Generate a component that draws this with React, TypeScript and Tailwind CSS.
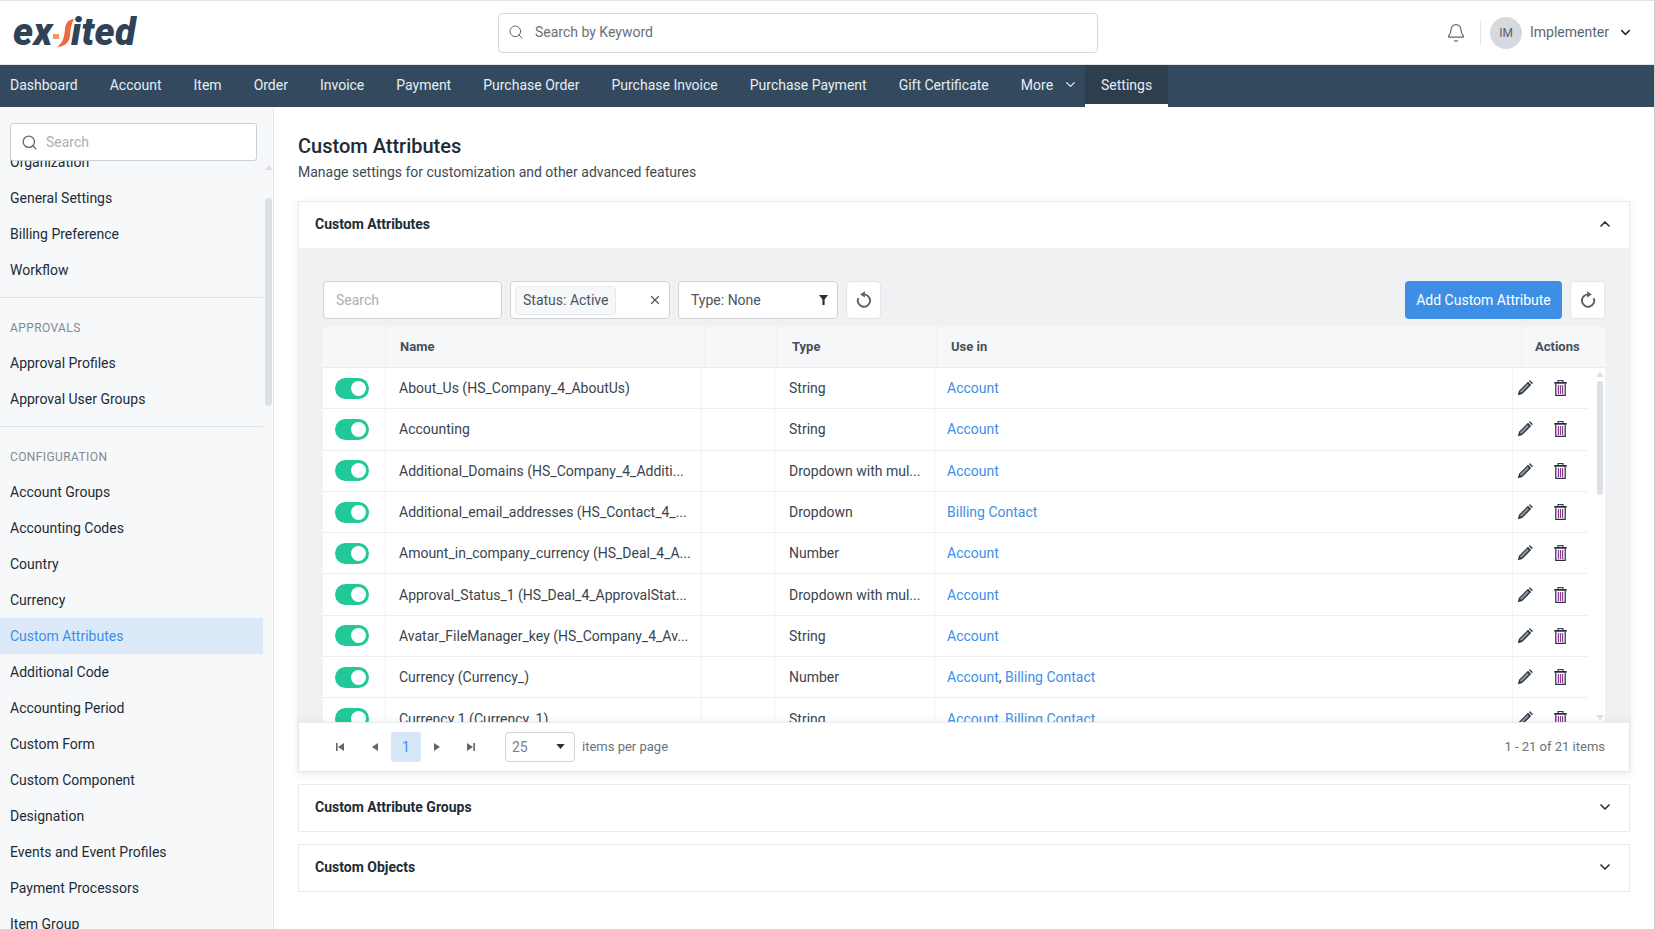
import { Bell, ChevronDown, ChevronUp, Search, X } from "lucide-react";

const navItems = ["Dashboard", "Account", "Item", "Order", "Invoice", "Payment", "Purchase Order", "Purchase Invoice", "Purchase Payment", "Gift Certificate"];

const rows = [
  { name: "About_Us (HS_Company_4_AboutUs)", type: "String", use: ["Account"] },
  { name: "Accounting", type: "String", use: ["Account"] },
  { name: "Additional_Domains (HS_Company_4_Additi...", type: "Dropdown with mul...", use: ["Account"] },
  { name: "Additional_email_addresses (HS_Contact_4_...", type: "Dropdown", use: ["Billing Contact"] },
  { name: "Amount_in_company_currency (HS_Deal_4_A...", type: "Number", use: ["Account"] },
  { name: "Approval_Status_1 (HS_Deal_4_ApprovalStat...", type: "Dropdown with mul...", use: ["Account"] },
  { name: "Avatar_FileManager_key (HS_Company_4_Av...", type: "String", use: ["Account"] },
  { name: "Currency (Currency_)", type: "Number", use: ["Account", "Billing Contact"] },
  { name: "Currency 1 (Currency_1)", type: "String", use: ["Account", "Billing Contact"] },
];

const sideTop = ["Organization", "General Settings", "Billing Preference", "Workflow"];
const sideApprovals = ["Approval Profiles", "Approval User Groups"];
const sideConfig = ["Account Groups", "Accounting Codes", "Country", "Currency", "Custom Attributes", "Additional Code", "Accounting Period", "Custom Form", "Custom Component", "Designation", "Events and Event Profiles", "Payment Processors", "Item Group"];

function Logo() {
  return (
    <div className="flex items-baseline text-[38px] leading-none font-black italic text-[#2e4358] tracking-[0.4px]">
      <span>ex</span>
      <svg width="22" height="34" viewBox="0 0 22 34" className="self-end -ml-px -mr-[3px] mb-[2px]">
        <rect x="1" y="19" width="6" height="5" fill="#f59a5c" />
        <path d="M22 4 C15 5 13.5 9 13 14 C12.5 21 11 28 5 32 C12 32 17 28 18 21 C18.5 15 19 9 22 4 Z" fill="#ef6a3a" />
      </svg>
      <span>ited</span>
    </div>
  );
}

function SideItem({ label, active }: { label: string; active?: boolean }) {
  return (
    <div className={`h-9 shrink-0 flex items-center pl-2.5 text-sm ${active ? "bg-[#dbe9f9] text-[#3d8fe6]" : "text-[#212b36]"}`}>
      {label}
    </div>
  );
}

function SideLabel({ label }: { label: string }) {
  return <div className="h-[23px] mt-[18px] mb-[6px] flex items-center pl-2.5 text-xs tracking-[0.4px] text-[#7f8a96]">{label}</div>;
}

function RefreshCcw() {
  return (
    <svg width="18" height="18" viewBox="0 0 16 16" fill="none">
      <path d="M2.9 6.3 A5.5 5.5 0 1 0 8 3" stroke="#5c6168" strokeWidth="1.7" />
      <path d="M8.8 0.2 V5.8 L4.6 3 Z" fill="#5c6168" />
    </svg>
  );
}

function RefreshCw() {
  return (
    <svg width="18" height="18" viewBox="0 0 16 16" fill="none">
      <path d="M13.1 6.3 A5.5 5.5 0 1 1 8 3" stroke="#5c6168" strokeWidth="1.7" />
      <path d="M7.2 0.2 V5.8 L11.4 3 Z" fill="#5c6168" />
    </svg>
  );
}

function PencilIcon() {
  return (
    <svg width="16" height="16" viewBox="0 0 16 16">
      <path d="M0.8 15.2 L2 10.8 L11 1.8 L14.2 5 L5.2 14 Z" fill="#2d3540" />
      <path d="M2.8 11.4 L10.4 3.8 L12 5.2 L4.4 12.9 Z" fill="#8a95a0" />
      <path d="M11.8 1 L13 0.2 L15.8 3 L15 4.2 Z" fill="#2d3540" />
    </svg>
  );
}

function TrashIcon() {
  return (
    <svg width="13" height="16" viewBox="0 0 13 16" fill="none">
      <rect x="0.3" y="2" width="12.4" height="1.7" fill="#262a38" />
      <rect x="4" y="0.4" width="5" height="2" stroke="#262a38" strokeWidth="1" />
      <path d="M1.8 3.5 V15.4 H11.2 V3.5" stroke="#2f2a40" strokeWidth="1.2" />
      <path d="M4.4 5 V14 M6.5 5 V14 M8.6 5 V14" stroke="#8a3a92" strokeWidth="1.2" />
    </svg>
  );
}

function Toggle() {
  return (
    <div className="w-[34px] h-[21px] rounded-full bg-[#20c997] flex items-center justify-end pr-[3px]">
      <div className="w-[15px] h-[15px] rounded-full bg-white" />
    </div>
  );
}

function PagerIcon({ kind }: { kind: "first" | "prev" | "next" | "last" }) {
  return (
    <svg width="10" height="10" viewBox="0 0 10 10" fill="#5f6670">
      {kind === "first" && <path d="M1 1 H2.6 V9 H1 Z M9 1 V9 L3 5 Z" />}
      {kind === "prev" && <path d="M8 1 V9 L2 5 Z" />}
      {kind === "next" && <path d="M2 1 V9 L8 5 Z" />}
      {kind === "last" && <path d="M9 1 H7.4 V9 H9 Z M1 1 V9 L7 5 Z" />}
    </svg>
  );
}

function CollapsedCard({ title }: { title: string }) {
  return (
    <div className="h-12 border border-[#e9ecef] bg-white flex items-center justify-between pl-4 pr-4 pb-[2px]">
      <span className="text-sm font-bold text-[#212b36]">{title}</span>
      <ChevronDown size={16} strokeWidth={2.5} className="text-[#26323d]" />
    </div>
  );
}

export default function App() {
  return (
    <div className="w-[1655px] h-[929px] overflow-hidden bg-white flex flex-col border-t border-[#e2e3e5] border-r-[#c9cbce] border-r font-['Roboto',sans-serif]">
      {/* top bar */}
      <header className="h-[64px] shrink-0 flex items-center pl-[13px] border-b border-[#e3e5e8]">
        <div className="w-[485px] pb-[2px]">
          <Logo />
        </div>
        <div className="w-[600px] h-10 border border-[#d5d8dc] rounded flex items-center pl-2.5 pb-[2px] text-sm text-[#69717a]">
          <Search size={16} strokeWidth={1.5} className="text-[#5f6670] -ml-px" />
          <span className="ml-[11px]">Search by Keyword</span>
        </div>
        <Bell size={20} strokeWidth={1.4} className="ml-[348px] text-[#5f6670]" />
        <div className="w-px h-6 bg-[#e6e8eb] ml-[14px]" />
        <div className="ml-[9px] w-8 h-8 rounded-full bg-[#d6d9dd] flex items-center justify-center text-xs text-[#5a5f66]">IM</div>
        <span className="ml-2 pb-[2px] text-sm text-[#5b6670]">Implementer</span>
        <ChevronDown size={15} strokeWidth={2.5} className="ml-[9px] text-[#26323d]" />
      </header>

      {/* nav */}
      <nav className="h-[42px] shrink-0 bg-[#334a5e] flex items-stretch pl-2.5 text-sm text-[#e6edf3]">
        <div className="flex items-center gap-8 pb-[3px]">
          {navItems.map((n) => (
            <span key={n}>{n}</span>
          ))}
          <span className="flex items-center gap-[10px] -mr-4">
            More
            <ChevronDown size={15} strokeWidth={2} />
          </span>
        </div>
        <div className="ml-[23px] w-[83px] bg-[#2f3e4e] border-b-[3px] border-white flex items-center justify-center">Settings</div>
      </nav>

      <div className="flex-1 min-h-0 flex">
        {/* sidebar */}
        <aside className="relative w-[274px] shrink-0 bg-[#f7f8fa] border-r border-[#e3e5e8] flex flex-col overflow-hidden">
          <div className="relative z-10 shrink-0 mt-4 ml-2.5 w-[247px] h-[38px] bg-white border border-[#ccd0d5] rounded-[3px] flex items-center pl-2.5 text-sm text-[#a9b0b8]">
            <Search size={17} strokeWidth={1.8} className="text-[#5f6670]" />
            <span className="ml-2">Search</span>
          </div>
          <div className="-mt-[17px] w-[263px] flex flex-col">
            {sideTop.map((s) => (
              <SideItem key={s} label={s} />
            ))}
            <div className="h-px shrink-0 bg-[#e0e3e6] mt-[9px]" />
            <SideLabel label="APPROVALS" />
            {sideApprovals.map((s) => (
              <SideItem key={s} label={s} />
            ))}
            <div className="h-px shrink-0 bg-[#e0e3e6] mt-[9px]" />
            <SideLabel label="CONFIGURATION" />
            {sideConfig.map((s) => (
              <SideItem key={s} label={s} active={s === "Custom Attributes"} />
            ))}
          </div>
          {/* scrollbar */}
          <div className="absolute left-[265px] top-[58px] w-0 h-0 border-x-[4px] border-x-transparent border-b-[5px] border-b-[#dcdfe3]" />
          <div className="absolute left-[265px] top-[91px] w-[7px] h-[208px] rounded bg-[#dcdfe3]" />
        </aside>

        {/* content */}
        <main className="flex-1 min-w-0 pl-6 pr-6 flex flex-col">
          <h1 className="mt-[25px] text-xl leading-7 font-medium text-[#212b36]">Custom Attributes</h1>
          <p className="text-sm leading-6 text-[#3f4a55]">Manage settings for customization and other advanced features</p>

          <section className="mt-[17px] h-[571px] shrink-0 border border-[#e9ecef] flex flex-col shadow-[0_2px_8px_rgba(0,0,0,0.08)]">
            <div className="h-[46px] shrink-0 flex items-center justify-between pl-4 pr-4 pb-[2px] bg-white">
              <span className="text-sm font-bold text-[#212b36]">Custom Attributes</span>
              <ChevronUp size={16} strokeWidth={2.5} className="text-[#26323d]" />
            </div>

            <div className="flex-1 min-h-0 bg-[#f0f1f3] pl-6 pr-6 pt-[33px] flex flex-col">
              {/* toolbar */}
              <div className="h-[38px] shrink-0 flex text-sm">
                <div className="w-[179px] bg-white border border-[#d0d3d8] rounded flex items-center pl-3 text-[#a9b0b8]">Search</div>
                <div className="ml-2 w-[160px] bg-white border border-[#d0d3d8] rounded flex items-center pl-1 pr-[7px] justify-between text-[#4a5560]">
                  <span className="h-[29px] px-[7px] bg-[#f6f7f9] border border-[#e6e8eb] rounded flex items-center">Status: Active</span>
                  <X size={14} strokeWidth={2} className="text-[#4f5862]" />
                </div>
                <div className="ml-2 w-[160px] bg-white border border-[#d0d3d8] rounded flex items-center pl-3 pr-[9px] justify-between text-[#4a5560]">
                  <span>Type: None</span>
                  <svg width="9" height="10" viewBox="0 0 9 10" fill="#2a3038">
                    <path d="M0 0 H9 L5.6 4.5 V10 H3.4 V4.5 Z" />
                  </svg>
                </div>
                <div className="ml-2 w-[35px] bg-white border border-[#e3e5e8] rounded flex items-center justify-center">
                  <RefreshCcw />
                </div>
                <div className="ml-auto w-[157px] bg-[#3d8fe6] rounded text-white flex items-center justify-center">Add Custom Attribute</div>
                <div className="ml-2 w-[35px] bg-white border border-[#e3e5e8] rounded flex items-center justify-center">
                  <RefreshCw />
                </div>
              </div>

              {/* table */}
              <div className="mt-[8px] flex-1 min-h-0 flex flex-col overflow-hidden">
                <div className="h-[41px] shrink-0 bg-[#f6f7f9] border-b border-[#e9ecef] flex text-[13px] font-bold text-[#46505a]">
                  <div className="w-[63px] border-r border-[#eef0f2]" />
                  <div className="w-[319px] border-r border-[#eef0f2] pl-[14px] flex items-center">Name</div>
                  <div className="w-[72px] border-r border-[#eef0f2]" />
                  <div className="w-[160px] border-r border-[#eef0f2] pl-[15px] flex items-center">Type</div>
                  <div className="w-[585px] border-r border-[#eef0f2] pl-[14px] flex items-center">Use in</div>
                  <div className="flex-1 pl-[13px] flex items-center">Actions</div>
                </div>
                <div className="relative flex-1 min-h-0 bg-white overflow-hidden">
                  {rows.map((r) => (
                    <div key={r.name} className="h-[41.3px] w-[1264px] border-b border-[#eceef0] flex text-sm text-[#3a444e]">
                      <div className="w-[63px] border-r border-[#f2f3f5] flex items-center pl-3">
                        <Toggle />
                      </div>
                      <div className="w-[316px] border-r border-[#f2f3f5] pl-[13px] flex items-center whitespace-nowrap overflow-hidden">{r.name}</div>
                      <div className="w-[73px] border-r border-[#f2f3f5]" />
                      <div className="w-[160px] border-r border-[#f2f3f5] pl-[14px] flex items-center whitespace-nowrap">{r.type}</div>
                      <div className="w-[578px] border-r border-[#f2f3f5] pl-[12px] flex items-center text-[#3d8fe6] whitespace-pre">
                        {r.use.map((u, i) => (
                          <span key={u}>
                            {i > 0 && <span className="text-[#3a444e]">, </span>}
                            {u}
                          </span>
                        ))}
                      </div>
                      <div className="flex-1 flex items-center pl-[4px] gap-[21px]">
                        <PencilIcon />
                        <TrashIcon />
                      </div>
                    </div>
                  ))}
                  {/* table scrollbar */}
                  <div className="absolute left-[1273px] top-[4px] w-0 h-0 border-x-[4px] border-x-transparent border-b-[5px] border-b-[#dcdfe3]" />
                  <div className="absolute left-[1274px] top-[13px] w-[6px] h-[114px] rounded bg-[#dcdfe3]" />
                  <div className="absolute left-[1273px] top-[347px] w-0 h-0 border-x-[4px] border-x-transparent border-t-[5px] border-t-[#dcdfe3]" />
                </div>
              </div>
            </div>

            {/* pager */}
            <div className="relative h-[49px] shrink-0 bg-white border-t border-[#e9ecef] flex items-center pl-[36px] pr-6 pb-[1px] text-[13px] text-[#6a727b] shadow-[0_-2px_6px_rgba(0,0,0,0.05)]">
              <PagerIcon kind="first" />
              <span className="ml-[25px]"><PagerIcon kind="prev" /></span>
              <span className="ml-[11px] w-[30px] h-[30px] bg-[#d8e7f8] text-[#3d8fe6] text-sm rounded-[2px] flex items-center justify-center">1</span>
              <span className="ml-[11px]"><PagerIcon kind="next" /></span>
              <span className="ml-[24px]"><PagerIcon kind="last" /></span>
              <div className="ml-[29px] w-[70px] h-[30px] border border-[#d0d3d8] rounded flex items-center justify-between pl-[6px] pr-[9px] text-sm text-[#7a828a]">
                <span>25</span>
                <svg width="9" height="5" viewBox="0 0 10 6" fill="#2a3038"><path d="M0 0 H10 L5 6 Z" /></svg>
              </div>
              <span className="ml-[7px]">items per page</span>
              <span className="ml-auto">1 - 21 of 21 items</span>
            </div>
          </section>

          <div className="mt-[12px] flex flex-col gap-3">
            <CollapsedCard title="Custom Attribute Groups" />
            <CollapsedCard title="Custom Objects" />
          </div>
        </main>
      </div>
    </div>
  );
}
